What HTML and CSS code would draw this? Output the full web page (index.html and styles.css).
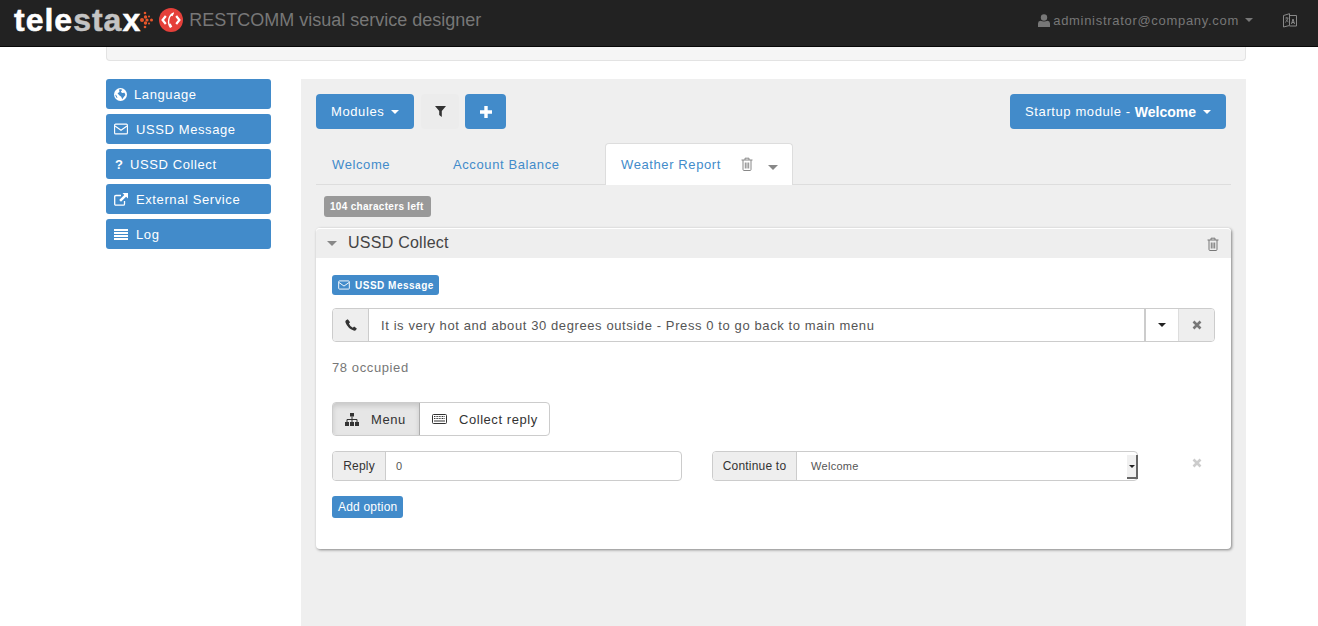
FILE: index.html
```html
<!DOCTYPE html>
<html lang="en">
<head>
    <meta charset="UTF-8">
    <title>RESTCOMM visual service designer</title>
    <link rel="stylesheet" href="styles.css">
</head>
<body>
    <svg class="sprite" xmlns="http://www.w3.org/2000/svg">
        <symbol id="i-mail" viewBox="0 0 14 12"><rect x=".6" y="1.1" width="12.8" height="9.8" rx="1" fill="none" stroke="currentColor" stroke-width="1.1"/><path d="M1 3l6 4.3L13 3" fill="none" stroke="currentColor" stroke-width="1.1"/></symbol>
        <symbol id="i-trash" viewBox="0 0 12 14"><path d="M.5 3h11M4 3V1.200h4V3M2 3v9.500q0 1 1 1h6q1 0 1-1V3M4.300 5.500v6M6 5.500v6M7.700 5.500v6" fill="none" stroke="currentColor" stroke-width="1"/></symbol>
        <symbol id="i-x" viewBox="0 0 10 10"><path d="M1.500 1.500l7 7M8.500 1.500l-7 7" fill="none" stroke="currentColor" stroke-width="2.600"/></symbol>
    </svg>

    <nav class="navbar">
        <div class="brand">
            <span class="logo">tele<span class="logo-mid">sta</span>x</span>
            <svg class="logo-dots" width="13" height="18" viewBox="0 0 13 18"><g fill="#e8562a"><circle cx="5" cy="2" r="1.300"/><circle cx="5" cy="16" r="1.300"/><circle cx="2" cy="9" r="2"/><circle cx="5.500" cy="6" r="1.700"/><circle cx="5.500" cy="12" r="1.700"/><circle cx="7" cy="9" r="1.600"/><circle cx="11.500" cy="9" r="1.500"/><circle cx="9" cy="5.500" r="1"/><circle cx="9" cy="12.500" r="1"/></g></svg>
            <svg class="logo-rc" width="24" height="24" viewBox="0 0 24 24"><circle cx="12" cy="12" r="12" fill="#e5403a"/><path d="M6.800 8L3.600 12l3.200 4M17.200 8l3.200 4-3.200 4" fill="none" stroke="#fff" stroke-width="2.200"/><path d="M14.800 4.200q-4.500 1.500-5.600 6.800t1.800 9l2.300-1.200-1.600-3.200-1.100.4q-.6-2.500 0-5t1.900-3.300l1 .5 1.600-3.300z" fill="#fff"/></svg>
            <span class="brand-title">RESTCOMM visual service designer</span>
        </div>
        <div class="nav-right">
            <svg class="nav-user" width="12" height="13" viewBox="0 0 12 13"><circle cx="6" cy="3.500" r="3.200" fill="currentColor"/><path d="M0 13V9.500Q0 7 2.500 6.700q3.500 1.600 7 0Q12 7 12 9.500V13z" fill="currentColor"/></svg>
            <span>administrator@company.com</span>
            <span class="caret nav-caret"></span>
            <svg class="nav-lang" width="14" height="15" viewBox="0 0 14 15"><path d="M.5 2.500l6-1.800v11.800l-6 1.500zM6.500 2.500h7v10.500h-7" fill="none" stroke="currentColor"/><path d="M2.300 5h3M3.800 4v1.500M5 5Q4.200 8.500 2 9.500M3 6.500q1 2 2.500 2.500" fill="none" stroke="currentColor" stroke-width=".8"/><path d="M8.500 11l1.500-5 1.500 5M9 9.500h2" fill="none" stroke="currentColor"/></svg>
        </div>
    </nav>

    <div class="container">
        <div class="top-well"></div>
        <div class="columns">
            <aside class="sidebar">
                <a class="side-btn">
                    <svg class="ico-globe" width="13" height="13" viewBox="0 0 13 13"><circle cx="6.500" cy="6.500" r="6.500" fill="#fff"/><path d="M5 1.500q2.500-.8 3.200.6L6.800 3.500 8 5l2.500-.3.900 2.300-2 2.500-1.200 1.700-1-2.500-2-1.500L3.500 5.200 5.500 4zM1 6.500l1.500 1 1 2.500-1.200-.5z" fill="#428bca"/></svg>
                    <span class="gap-lang">Language</span>
                </a>
                <a class="side-btn"><svg class="ico-side" width="14" height="12"><use href="#i-mail"/></svg><span class="gap-wide">USSD Message</span></a>
                <a class="side-btn"><span class="ico-q">?</span><span class="gap-q">USSD Collect</span></a>
                <a class="side-btn">
                    <svg class="ico-side" width="14" height="13" viewBox="0 0 14 13"><path d="M10.500 8v3q0 1.200-1.200 1.200H1.800Q.7 12.200.7 11V3.700q0-1.200 1.200-1.200H7" fill="none" stroke="#fff" stroke-width="1.300"/><path d="M8.500 0H14v5.500l-1.900-1.800L7 8.800 5.200 7l5.100-5.100z" fill="#fff"/></svg>
                    <span class="gap-wide">External Service</span>
                </a>
                <a class="side-btn">
                    <svg class="ico-side" width="14" height="11" viewBox="0 0 14 11"><path d="M0 0h14v2H0zM0 3h14v2H0zM0 6h14v2H0zM0 9h14v2H0z" fill="#fff"/></svg>
                    <span class="gap-wide">Log</span>
                </a>
            </aside>

            <main class="workspace">
                <div class="toolbar">
                    <a class="btn btn-blue">Modules <span class="caret"></span></a>
                    <a class="btn btn-filter">
                        <svg width="11" height="11" viewBox="0 0 11 11"><path d="M0 0h11L6.800 5v6L4.200 9V5z" fill="#333"/></svg>
                    </a>
                    <a class="btn btn-blue btn-plus">
                        <svg width="12" height="12" viewBox="0 0 12 12"><path d="M4.300 0h3.400v4.300H12v3.400H7.700V12H4.300V7.700H0V4.300h4.300z" fill="#fff"/></svg>
                    </a>
                    <a class="btn btn-blue btn-startup">Startup module - <b>Welcome</b> <span class="caret"></span></a>
                </div>

                <div class="tabs">
                    <a class="tab tab-welcome">Welcome</a>
                    <a class="tab tab-account">Account Balance</a>
                    <a class="tab tab-active">
                        Weather Report
                        <svg class="tab-trash" width="12" height="14"><use href="#i-trash"/></svg>
                        <span class="caret tab-caret"></span>
                    </a>
                </div>

                <div class="chars-row"><span class="badge">104 characters left</span></div>

                <section class="panel">
                    <header class="panel-head">
                        <span class="caret head-caret"></span>
                        <span class="panel-title">USSD Collect</span>
                        <svg class="head-trash" width="12" height="14"><use href="#i-trash"/></svg>
                    </header>
                    <div class="panel-body">
                        <div class="msg-row">
                            <span class="msg-label">
                                <svg width="12" height="10"><use href="#i-mail"/></svg>
                                USSD Message
                            </span>
                        </div>
                        <div class="input-group">
                            <span class="addon addon-phone">
                                <svg width="12" height="12" viewBox="0 0 12 12"><path d="M2.800.3L1 1.300Q0 2 .5 3.600 2.800 9.600 8.700 11.600q1.500.4 2.300-.7l.8-1.500-2.700-1.900-1.300 1.200Q5 7.600 3.900 4.600l1.200-1.300z" fill="#333"/></svg>
                            </span>
                            <div class="field field-msg">It is very hot and about 30 degrees outside - Press 0 to go back to main menu</div>
                            <span class="addon-btn addon-caret"><span class="caret caret-dark"></span></span>
                            <span class="addon-btn addon-clear"><svg width="10" height="10"><use href="#i-x"/></svg></span>
                        </div>
                        <p class="occupied">78 occupied</p>
                        <div class="btn-group">
                            <a class="seg seg-active">
                                <svg width="14" height="13" viewBox="0 0 14 13"><path d="M5 0h4v3.500H5zM0 9h4v4H0zM5 9h4v4H5zM10 9h4v4h-4z" fill="#333"/><path d="M7 3.500V9M2 9V6.500h10V9" fill="none" stroke="#333"/></svg>
                                <span>Menu</span>
                            </a>
                            <a class="seg seg-reply">
                                <svg width="15" height="10" viewBox="0 0 15 10"><rect x=".5" y=".5" width="14" height="9" rx="1" fill="none" stroke="#333"/><path d="M2 2.500h11M2 4.500h11" stroke="#333" stroke-dasharray="1 .6"/><path d="M2 7h11" stroke="#333"/></svg>
                                <span>Collect reply</span>
                            </a>
                        </div>
                        <div class="option-row">
                            <div class="input-group small-group reply-group">
                                <span class="addon addon-small addon-reply">Reply</span>
                                <div class="field field-small">0</div>
                            </div>
                            <div class="input-group small-group continue-group">
                                <span class="addon addon-small addon-continue">Continue to</span>
                                <div class="field field-small field-select">
                                    <span>Welcome</span>
                                    <span class="select-nub"><span class="caret caret-dark caret-tiny"></span></span>
                                </div>
                            </div>
                            <svg class="option-x" width="10" height="10"><use href="#i-x"/></svg>
                        </div>
                        <a class="btn-add">Add option</a>
                    </div>
                </section>
            </main>
        </div>
    </div>
</body>
</html>
```

FILE: styles.css
```css
html, body {
    height: 100%;
}
body {
    margin: 0;
    font-family: "Liberation Sans", Arial, sans-serif;
    font-size: 14px;
    letter-spacing: 0.6px;
    color: #333;
    background-color: #fff;
    overflow: hidden;
}
a {
    cursor: pointer;
}
.sprite {
    display: none;
}
.caret {
    display: inline-block;
    width: 0;
    height: 0;
    margin-left: 2px;
    vertical-align: middle;
    border-top: 4px solid currentColor;
    border-left: 4px solid transparent;
    border-right: 4px solid transparent;
}

/* navbar */
.navbar {
    display: flex;
    justify-content: space-between;
    align-items: center;
    height: 46px;
    background-color: #222;
    border-bottom: 1px solid #080808;
    color: #777;
}
.brand {
    display: flex;
    align-items: center;
    padding-left: 14px;
}
.logo {
    font-size: 32px;
    font-weight: bold;
    letter-spacing: 1px;
    line-height: 30px;
    color: #fff;
    margin-top: -6px;
    -webkit-text-stroke: 0.5px currentColor;
}
.logo-mid {
    color: #c4c4c4;
}
.logo-dots {
    margin-left: -1px;
    margin-top: -6px;
}
.logo-rc {
    margin-left: 6px;
    margin-top: -6px;
}
.brand-title {
    font-size: 18px;
    letter-spacing: 0;
    margin-left: 6px;
    margin-top: -6px;
    color: #777;
}
.nav-right {
    display: flex;
    align-items: center;
    font-size: 13px;
    letter-spacing: 0.7px;
    margin-top: -6px;
    padding-right: 21px;
}
.nav-user {
    margin-right: 3px;
}
.nav-caret {
    margin-left: 6px;
}
.nav-lang {
    margin-left: 30px;
    color: #888;
}

/* page frame */
.container {
    width: 1140px;
    margin-left: 106px;
}
.top-well {
    height: 13px;
    background-color: #f5f5f5;
    border: 1px solid #e3e3e3;
    border-top: 0;
    border-radius: 0 0 4px 4px;
}
.columns {
    display: flex;
    gap: 30px;
    margin-top: 18px;
}

/* left column */
.sidebar {
    display: flex;
    flex-direction: column;
    gap: 5px;
    width: 165px;
}
.side-btn {
    display: flex;
    align-items: center;
    height: 30px;
    padding-left: 8px;
    border-radius: 3px;
    background-color: #428bca;
    color: #fff;
    font-size: 13px;
    box-sizing: border-box;
}
.ico-globe {
    flex: none;
}
.ico-side {
    flex: none;
    color: #fff;
}
.ico-q {
    width: 7px;
    font-weight: bold;
    margin-left: 1px;
    font-size: 13px;
}
.gap-lang {
    margin-left: 7px;
}
.gap-wide {
    margin-left: 8px;
}
.gap-q {
    margin-left: 8px;
}

/* right column */
.workspace {
    width: 945px;
    height: 547px;
    padding: 15px;
    box-sizing: border-box;
    background-color: #efefef;
}
.toolbar {
    display: flex;
    gap: 7px;
    padding-right: 5px;
}
.btn {
    display: flex;
    align-items: center;
    justify-content: center;
    height: 35px;
    border-radius: 4px;
    font-size: 13px;
    box-sizing: border-box;
}
.btn .caret {
    margin-left: 7px;
}
.btn-blue {
    background-color: #428bca;
    color: #fff;
    padding: 0 15px;
}
.btn-blue b {
    margin-left: 4px;
    font-size: 14px;
    letter-spacing: 0;
}
.btn-filter {
    width: 38px;
    background-color: #ececec;
}
.btn-plus {
    width: 41px;
    margin-left: -1px;
    padding: 0;
}
.btn-startup {
    margin-left: auto;
}

/* tabs */
.tabs {
    display: flex;
    align-items: flex-end;
    height: 41px;
    margin-top: 14px;
    width: 915px;
    border-bottom: 1px solid #ddd;
}
.tab {
    display: flex;
    align-items: center;
    height: 41px;
    margin-bottom: -1px;
    color: #428bca;
    font-size: 13px;
}
.tab-welcome {
    width: 121px;
    padding-left: 16px;
    box-sizing: border-box;
}
.tab-account {
    width: 168px;
    padding-left: 16px;
    box-sizing: border-box;
}
.tab-active {
    width: 188px;
    height: 42px;
    padding-left: 15px;
    box-sizing: border-box;
    background-color: #fff;
    border: 1px solid #ddd;
    border-bottom: 0;
    border-radius: 4px 4px 0 0;
}
.tab-trash {
    margin-left: 20px;
    margin-top: -2px;
    color: #888;
}
.tab-caret {
    margin-left: 15px;
    margin-top: 5px;
    color: #888;
    border-top-width: 5px;
    border-left-width: 5px;
    border-right-width: 5px;
}
.chars-row {
    display: flex;
    margin-top: 11px;
    padding-left: 8px;
}
.badge {
    display: inline-block;
    height: 21px;
    line-height: 21px;
    padding: 0 7px 0 6px;
    border-radius: 3px;
    background-color: #999;
    color: #fff;
    font-size: 10px;
    font-weight: bold;
    letter-spacing: 0.3px;
}

/* module panel */
.panel {
    width: 915px;
    height: 321px;
    margin-top: 11px;
    background-color: #fff;
    border-radius: 4px;
    box-shadow: 1px 1px 3px rgba(0, 0, 0, 0.45);
}
.panel-head {
    display: flex;
    align-items: center;
    height: 30px;
    padding: 0 12px 0 11px;
    background-color: #eee;
    border-top: 1px solid #fff;
    border-radius: 4px 4px 0 0;
    box-sizing: border-box;
}
.head-caret {
    margin-left: 0;
    border-top-width: 5px;
    border-left-width: 5px;
    border-right-width: 5px;
    color: #888;
}
.panel-title {
    margin-left: 11px;
    margin-top: -1px;
    font-size: 16px;
    letter-spacing: 0.25px;
    color: #444;
}
.head-trash {
    margin-left: auto;
    color: #777;
}
.panel-body {
    padding: 17px 16px 0;
}
.msg-row {
    display: flex;
}
.msg-label {
    display: flex;
    align-items: center;
    gap: 5px;
    height: 20px;
    padding: 0 5px 0 6px;
    border-radius: 3px;
    background-color: #428bca;
    color: #fff;
    font-size: 10px;
    font-weight: bold;
    letter-spacing: 0.5px;
}
.input-group {
    display: flex;
    height: 34px;
    margin-top: 13px;
    box-sizing: border-box;
    border: 1px solid #ccc;
    border-radius: 4px;
    background-color: #fff;
}
.addon {
    display: flex;
    align-items: center;
    justify-content: center;
    background-color: #eee;
    border-right: 1px solid #ccc;
    border-radius: 3px 0 0 3px;
    box-sizing: border-box;
}
.addon-phone {
    width: 36px;
}
.field {
    flex: 1;
    display: flex;
    align-items: center;
    font-size: 13px;
    color: #555;
}
.field-msg {
    padding-left: 12px;
    border-right: 2px solid #ccc;
}
.addon-btn {
    display: flex;
    align-items: center;
    justify-content: center;
    box-sizing: border-box;
}
.addon-caret {
    width: 33px;
    border-right: 1px solid #ddd;
}
.caret-dark {
    color: #222;
    margin-left: 0;
}
.addon-clear {
    width: 35px;
    background-color: #eee;
    border-radius: 0 3px 3px 0;
    color: #777;
}
.occupied {
    margin: 17px 0 0;
    font-size: 13px;
    line-height: 18px;
    color: #777;
}
.btn-group {
    display: flex;
    width: 218px;
    height: 34px;
    margin-top: 25px;
    box-sizing: border-box;
    border: 1px solid #ccc;
    border-radius: 4px;
    font-size: 13px;
    letter-spacing: 0.55px;
}
.seg {
    display: flex;
    align-items: center;
    box-sizing: border-box;
}
.seg-active {
    width: 87px;
    padding-left: 12px;
    gap: 12px;
    background-color: #e6e6e6;
    border-right: 1px solid #adadad;
    border-radius: 3px 0 0 3px;
    box-shadow: inset 0 3px 5px rgba(0, 0, 0, 0.125);
}
.seg-reply {
    flex: 1;
    padding-left: 12px;
    gap: 12px;
}
.option-row {
    display: flex;
    align-items: flex-start;
    margin-top: 15px;
}
.small-group {
    height: 30px;
    margin-top: 0;
}
.reply-group {
    width: 350px;
}
.continue-group {
    width: 426px;
    margin-left: 30px;
}
.addon-small {
    font-size: 12px;
    letter-spacing: 0.2px;
}
.addon-reply {
    width: 53px;
}
.addon-continue {
    width: 84px;
}
.field-small {
    font-size: 11px;
    letter-spacing: 0.3px;
    padding-left: 10px;
}
.field-select {
    justify-content: space-between;
    padding-left: 14px;
}
.select-nub {
    display: flex;
    align-items: center;
    justify-content: center;
    width: 11px;
    height: 24px;
    margin-top: 2px;
    margin-right: -1px;
    background-color: #f0f0f0;
    border-right: 2px solid #666;
    border-bottom: 2px solid #666;
    box-sizing: border-box;
}
.caret-tiny {
    border-top-width: 3px;
    border-left-width: 3px;
    border-right-width: 3px;
}
.option-x {
    margin-left: 54px;
    margin-top: 7px;
    color: #ccc;
}
.btn-add {
    display: inline-block;
    height: 22px;
    line-height: 22px;
    margin-top: 15px;
    padding: 0 6px;
    border-radius: 3px;
    background-color: #428bca;
    color: #fff;
    font-size: 12px;
    letter-spacing: 0.2px;
}
```
